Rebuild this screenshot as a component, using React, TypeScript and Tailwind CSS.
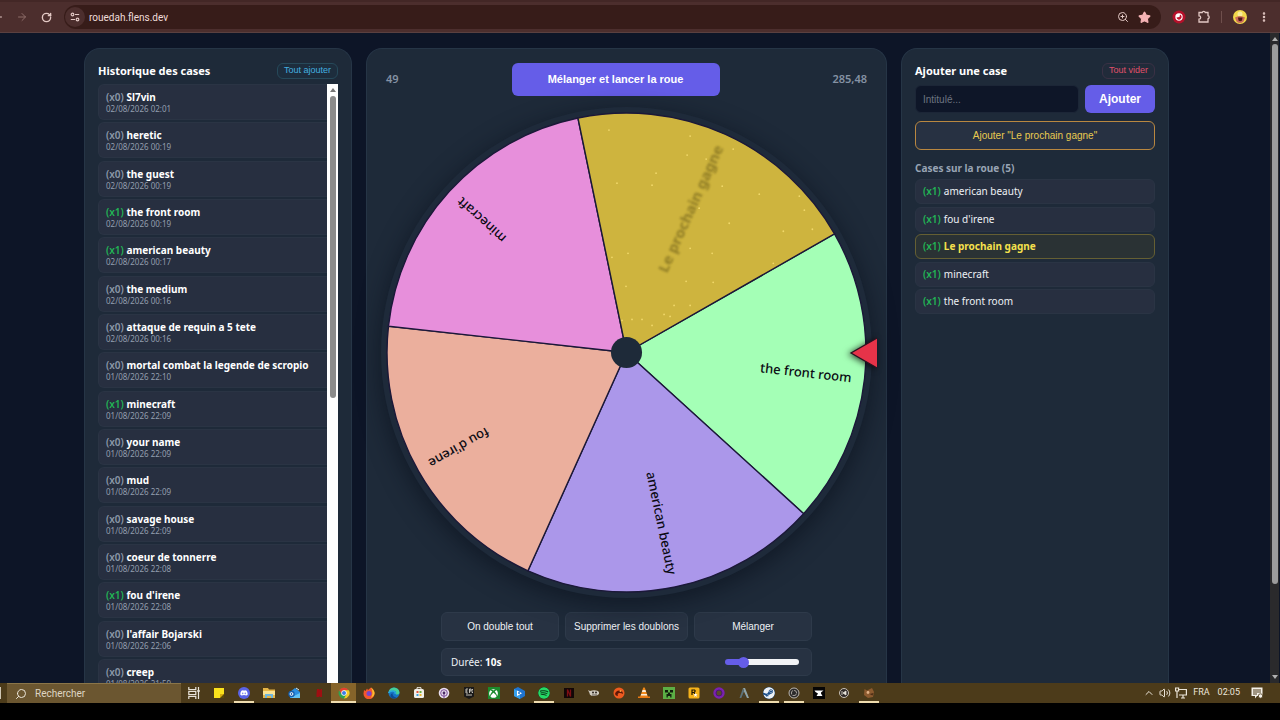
import { ReactNode, useState } from "react";
import {
  ArrowLeft,
  ArrowRight,
  ChevronUp,
  EllipsisVertical,
  RotateCw,
  Search,
  Star,
  Volume2,
  ZoomIn,
} from "lucide-react";
import { FaDiscord, FaSpotify, FaSteam, FaXbox } from "react-icons/fa";

type HistoryEntry = { count: number; name: string; date: string };
type Slice = { label: string; color: string; gold?: boolean };

const history: HistoryEntry[] = [
  { count: 0, name: "Sl7vin", date: "02/08/2026 02:01" },
  { count: 0, name: "heretic", date: "02/08/2026 00:19" },
  { count: 0, name: "the guest", date: "02/08/2026 00:19" },
  { count: 1, name: "the front room", date: "02/08/2026 00:19" },
  { count: 1, name: "american beauty", date: "02/08/2026 00:17" },
  { count: 0, name: "the medium", date: "02/08/2026 00:16" },
  { count: 0, name: "attaque de requin a 5 tete", date: "02/08/2026 00:16" },
  { count: 0, name: "mortal combat la legende de scropio", date: "01/08/2026 22:10" },
  { count: 1, name: "minecraft", date: "01/08/2026 22:09" },
  { count: 0, name: "your name", date: "01/08/2026 22:09" },
  { count: 0, name: "mud", date: "01/08/2026 22:09" },
  { count: 0, name: "savage house", date: "01/08/2026 22:09" },
  { count: 0, name: "coeur de tonnerre", date: "01/08/2026 22:08" },
  { count: 1, name: "fou d'irene", date: "01/08/2026 22:08" },
  { count: 0, name: "l'affair Bojarski", date: "01/08/2026 22:06" },
  { count: 0, name: "creep", date: "01/08/2026 21:59" },
];

const slices: Slice[] = [
  { label: "the front room", color: "#a4ffb6" },
  { label: "american beauty", color: "#ab97ea" },
  { label: "fou d'irene", color: "#ebaf9d" },
  { label: "minecraft", color: "#e78fdb" },
  { label: "Le prochain gagne", color: "#ceb43e", gold: true },
];

const cases = ["american beauty", "fou d'irene", "Le prochain gagne", "minecraft", "the front room"];

// glitter on the golden slice
const sparkles = [
  [690, 136], [687, 155], [733, 149], [656, 173], [617, 183], [652, 185], [759, 194], [799, 196],
  [804, 210], [729, 223], [812, 229], [783, 231], [690, 248], [712, 253], [612, 257], [628, 253],
  [773, 263], [686, 281], [713, 282], [626, 286], [674, 305], [690, 305], [664, 314], [670, 316],
  [632, 319], [642, 319], [652, 325], [622, 320], [699, 208], [609, 130], [706, 159], [722, 186],
];

/* ---------- Browser bar ---------- */

function BrowserBar() {
  return (
    <header className="flex h-[33px] shrink-0 items-center border-t-2 border-b border-t-[#432726] border-b-[#5a4040] bg-[#4c2e2d] pr-[10px] text-[#e3c9c5]">
      <button aria-label="Précédent" className="-ml-2 w-3">
        <ArrowLeft size={12} />
      </button>
      <button aria-label="Suivant" className="ml-3 text-[#8d6c69]">
        <ArrowRight size={12} />
      </button>
      <button aria-label="Actualiser" className="ml-[13px]">
        <RotateCw size={11} strokeWidth={3} />
      </button>
      <div className="ml-3 flex h-6 flex-1 items-center rounded-full bg-[#371c19] pr-[10px]">
        <button
          aria-label="Informations sur le site"
          className="ml-px flex size-5 items-center justify-center rounded-full bg-[#4c2e2d]"
        >
          <svg viewBox="0 0 12 12" className="size-[10px]" fill="none" stroke="currentColor" strokeWidth="1.4">
            <circle cx="3" cy="3" r="1.6" />
            <path d="M6 3h5M1 9h5" />
            <circle cx="9" cy="9" r="1.6" />
          </svg>
        </button>
        <span className="ml-1 flex-1 font-['Roboto',sans-serif] text-[10px] text-[#efdcd9]">rouedah.flens.dev</span>
        <button aria-label="Zoom">
          <ZoomIn size={12} />
        </button>
        <button aria-label="Favori" className="ml-[9px] text-[#f5b3b5]">
          <Star size={13} fill="currentColor" />
        </button>
      </div>
      <button aria-label="Extension" className="ml-[11px]">
        <svg viewBox="0 0 14 14" className="size-[14px]">
          <circle cx="7" cy="7" r="6.5" fill="#b5102a" />
          <circle cx="7" cy="7" r="3.700" fill="#fff" />
          <path d="M4.500 7.500A2.600 2.600 0 1 0 8 4.600L7.500 7z" fill="#c4122c" />
        </svg>
      </button>
      <button aria-label="Extensions" className="ml-[11px]">
        <svg viewBox="0 0 14 14" className="size-[14px]" fill="none" stroke="currentColor" strokeWidth="1.3">
          <path d="M2 2.500h3.200a1.600 1.600 0 0 1 3.100 0H11v3.200a1.600 1.600 0 0 1 0 3.100V12H2V9.200a1.700 1.700 0 0 0 0-3.400z" />
        </svg>
      </button>
      <span className="ml-[10px] h-3 w-px bg-[#6f4f4c]" />
      <button aria-label="Profil" className="ml-[11px]">
        <svg viewBox="0 0 14 14" className="size-[14px]">
          <circle cx="7" cy="7" r="7" fill="#f2d84a" />
          <circle cx="7" cy="4" r="2.5" fill="#f8ec9a" />
          <path d="M2 7.5q5-3 10 0l-1.5 4q-3.500 3-7 0z" fill="#c96a58" />
          <path d="M5 7.500h4.500l-.5 3q-2 1.500-3.500 0z" fill="#4b1618" />
        </svg>
      </button>
      <button aria-label="Menu" className="ml-[11px]">
        <EllipsisVertical size={12} strokeWidth={3} />
      </button>
    </header>
  );
}

/* ---------- Shared bits ---------- */

function Panel({ children, className = "px-[13px]" }: { children: ReactNode; className?: string }) {
  return (
    <section className={`min-w-0 rounded-t-2xl border border-b-0 border-[#263546] bg-[#1e2a39] pt-[14px] ${className}`}>
      {children}
    </section>
  );
}

function Count({ value }: { value: number }) {
  return <span className={value > 0 ? "font-semibold text-[#22b455]" : "font-semibold text-[#8b97a8]"}>(x{value})</span>;
}

/* ---------- Left: history ---------- */

function HistoryPanel() {
  return (
    <Panel>
      <div className="flex h-4 items-center justify-between">
        <h2 className="text-[11px] font-bold text-white">Historique des cases</h2>
        <button className="h-4 rounded-md border border-[#26495a] bg-[#1d2d3d] px-[6px] font-['Liberation_Sans',sans-serif] text-[9px] text-[#43b0e0]">
          Tout ajouter
        </button>
      </div>
      <div className="mt-[5px] flex">
        <ul className="flex h-[611px] min-w-0 flex-1 flex-col justify-between">
          {history.map((entry) => (
            <li
              key={entry.name}
              className="h-9 shrink-0 rounded-l-md border border-r-0 border-[#2a3444] bg-[#272f40] px-[7px] pt-[5px]"
            >
              <p className="text-[10px] leading-[14px] font-bold whitespace-nowrap text-white">
                <Count value={entry.count} /> {entry.name}
              </p>
              <p className="text-[8px] leading-[10px] text-[#939eae]">{entry.date}</p>
            </li>
          ))}
        </ul>
        {/* Scrollbar */}
        <div className="flex w-[11px] flex-col items-center bg-white pt-1">
          <span className="border-x-[3px] border-b-4 border-x-transparent border-b-[#777]" />
          <span className="mt-1 h-[302px] w-[6px] rounded-full bg-[#8b8b8b]" />
        </div>
      </div>
    </Panel>
  );
}

/* ---------- Center: wheel ---------- */

const CX = 245;
const CY = 245;
const R = 239;
const START = -29.7;
const STEP = 72;

function point(angle: number, radius: number) {
  const rad = (angle * Math.PI) / 180;
  return `${CX + radius * Math.cos(rad)} ${CY + radius * Math.sin(rad)}`;
}

function Wheel() {
  return (
    <div className="relative mt-[11px]">
      <div className="rounded-full bg-[#1e2a3a] shadow-[0_6px_22px_2px_rgba(10,17,28,0.6)]">
        <svg viewBox="0 0 490 490" className="block w-full" role="img" aria-label="Roue">
          <defs>
            <filter id="soft" x="-10%" y="-50%" width="120%" height="200%">
              <feGaussianBlur stdDeviation="0.8" />
            </filter>
          </defs>
          {slices.map((slice, i) => {
            const from = START + i * STEP;
            return (
              <path
                key={slice.label}
                d={`M${CX} ${CY}L${point(from, R)}A${R} ${R} 0 0 1 ${point(from + STEP, R)}Z`}
                fill={slice.color}
                stroke="#1b1838"
                strokeWidth="1.4"
              />
            );
          })}
          {sparkles.map(([x, y]) => (
            <circle key={`${x}-${y}`} cx={x - 381.5} cy={y - 107} r="0.9" fill="#f7de72" opacity="0.85" />
          ))}
          {slices.map((slice, i) => (
            <text
              key={slice.label}
              x={CX + 226}
              y={CY + 5}
              textAnchor="end"
              transform={`rotate(${START + (i + 0.5) * STEP} ${CX} ${CY})`}
              className={slice.gold ? "text-[15px] font-bold" : "text-[13px] font-medium"}
              fill={slice.gold ? "#7b6a1d" : "#0a0a12"}
              opacity={slice.gold ? 0.75 : 1}
              filter={slice.gold ? "url(#soft)" : undefined}
            >
              {slice.label}
            </text>
          ))}
          <circle cx={CX} cy={CY} r="15.500" fill="#1e2a39" />
        </svg>
      </div>
      {/* Pointer */}
      <svg
        viewBox="0 0 28 32"
        className="absolute top-1/2 -right-[5px] h-8 w-7 -translate-y-1/2 drop-shadow-[-2px_1px_3px_rgba(0,0,0,0.7)]"
      >
        <path d="M28 1L2 16l26 15z" fill="#e63349" />
        <path d="M28 1L2 16l26 15" fill="none" stroke="#2a1320" strokeWidth="1.300" />
      </svg>
    </div>
  );
}

function WheelPanel() {
  const [duration, setDuration] = useState(10);
  const fill = 7 + (duration / 50) * 86;
  const action =
    "h-[29px] flex-1 rounded-md border border-[#2e3a4a] bg-[#273242] px-2 text-[10px] whitespace-nowrap text-[#eef1f5]";

  return (
    <Panel className="px-[14px]">
      <div className="flex items-center justify-between px-[5px] text-[11px] font-semibold text-[#8592a4]">
        <span>49</span>
        <button className="h-[33px] w-[208px] rounded-md bg-[#655de8] font-['Liberation_Sans',sans-serif] text-[11px] font-bold text-white">
          Mélanger et lancer la roue
        </button>
        <span>285,48</span>
      </div>
      <Wheel />
      <div className="mx-auto mt-[14px] w-[371px] font-['Liberation_Sans',sans-serif]">
        <div className="flex gap-[6px]">
          <button className={action}>On double tout</button>
          <button className={action}>Supprimer les doublons</button>
          <button className={action}>Mélanger</button>
        </div>
        <div className="mt-[7px] flex h-7 items-center justify-between rounded-md border border-[#2e3a4a] bg-[#273242] pr-3 pl-[9px]">
          <label htmlFor="duration" className="font-['Noto_Sans',sans-serif] text-[10px] text-[#eef1f5]">
            Durée: <b className="text-white">{duration}s</b>
          </label>
          <input
            id="duration"
            type="range"
            min={0}
            max={50}
            value={duration}
            onChange={(e) => setDuration(Number(e.target.value))}
            style={{ backgroundImage: `linear-gradient(to right, #655de8 ${fill}%, #f1f3f5 ${fill}%)` }}
            className="h-[6px] w-[74px] appearance-none rounded-full [&::-webkit-slider-thumb]:size-[11px] [&::-webkit-slider-thumb]:appearance-none [&::-webkit-slider-thumb]:rounded-full [&::-webkit-slider-thumb]:bg-[#655de8]"
          />
        </div>
      </div>
    </Panel>
  );
}

/* ---------- Right: add a case ---------- */

function AddPanel() {
  return (
    <Panel>
      <div className="flex h-4 items-center justify-between">
        <h2 className="text-[11px] font-bold text-white">Ajouter une case</h2>
        <button className="h-4 rounded-md border border-[#3a3145] bg-[#212b3a] px-[6px] font-['Liberation_Sans',sans-serif] text-[9px] text-[#e0506a]">
          Tout vider
        </button>
      </div>
      <form className="mt-[6px] flex gap-[6px]" onSubmit={(e) => e.preventDefault()}>
        <input
          type="text"
          aria-label="Intitulé"
          placeholder="Intitulé..."
          className="h-7 min-w-0 flex-1 rounded-md border border-[#1c2637] bg-[#0e1628] px-[7px] font-['Liberation_Sans',sans-serif] text-[10px] text-white placeholder:text-[#6d7480]"
        />
        <button className="h-7 w-[70px] rounded-md bg-[#655de8] font-['Liberation_Sans',sans-serif] text-xs font-bold text-white">
          Ajouter
        </button>
      </form>
      <button className="mt-2 h-[29px] w-full rounded-md border border-[#b98740] bg-[#273142] font-['Liberation_Sans',sans-serif] text-[10px] text-[#e9cb50]">
        Ajouter "Le prochain gagne"
      </button>
      <h3 className="mt-[10px] text-[10px] leading-4 font-bold text-[#98a4b4]">Cases sur la roue (5)</h3>
      <ul className="mt-[3px] flex h-[135px] flex-col justify-between">
        {cases.map((name) => {
          const gold = name === "Le prochain gagne";
          return (
            <li
              key={name}
              className={`flex h-[25px] items-center gap-[3px] rounded-md border px-[7px] text-[10px] ${
                gold
                  ? "border-[#655f33] bg-[#2a3234] font-bold text-[#f5e04c]"
                  : "border-[#2a3444] bg-[#272f40] text-[#eef1f5]"
              }`}
            >
              <Count value={1} />
              <span>{name}</span>
            </li>
          );
        })}
      </ul>
    </Panel>
  );
}

/* ---------- Taskbar ---------- */

type App = { name: string; icon: ReactNode; open?: boolean; active?: boolean };

const svg = (children: ReactNode) => (
  <svg viewBox="0 0 12 12" className="size-3">
    {children}
  </svg>
);

const apps: App[] = [
  {
    name: "Vue des tâches",
    icon: svg(
      <g fill="none" stroke="#e9e4da" strokeWidth="1.200">
        <path d="M.8 0v2.500h7V0M.8 12V9.500h7V12M.8 4.300h7v3.400h-7zM10.500 0v12" />
        <path d="M9.300 4h2.400" strokeWidth="2" />
      </g>
    ),
  },
  {
    name: "Pense-bête",
    icon: svg(
      <>
        <path d="M1 1h10v6L7 11H1z" fill="#fbe21c" />
        <path d="M7 7h4v4H7z" fill="#5b4a08" />
        <path d="M7 11l4-4H7z" fill="#d9ad0c" />
      </>
    ),
  },
  {
    name: "Discord",
    open: true,
    icon: (
      <span className="flex size-3 items-center justify-center rounded-full bg-[#5a63e6] text-white">
        <FaDiscord size={8} />
      </span>
    ),
  },
  {
    name: "Explorateur",
    icon: svg(
      <>
        <path d="M0 1h5l1 1.500h6V11H0z" fill="#e5b546" />
        <path d="M0 4h12v4H0z" fill="#f9e294" />
        <path d="M2 7h8v4H8V9H4v2H2z" fill="#6fb5dc" />
      </>
    ),
  },
  {
    name: "Outlook",
    icon: svg(
      <>
        <path d="M2 5l5-4 5 4v6H2z" fill="#2b8fe0" />
        <path d="M2 11l10-5v5z" fill="#63c4f5" />
        <circle cx="3.500" cy="7" r="3.200" fill="#155fae" />
        <circle cx="3.500" cy="7" r="1.400" fill="none" stroke="#fff" />
        <path d="M8 1l3 2" stroke="#d7ecfa" />
      </>
    ),
  },
  { name: "Jeu", icon: svg(<path d="M4 2h2l1 1 1-1h1v8H7L6 9v1H3.500V7z" fill="#9e0f12" />) },
  {
    name: "Chrome",
    open: true,
    active: true,
    icon: svg(
      <>
        <circle cx="6" cy="6" r="5.500" fill="#2fa24f" />
        <path d="M1.200 3.200A5.500 5.500 0 0 1 10.800 3.200L6 3.500 3.700 7.200z" fill="#e5402f" />
        <path d="M10.800 3.200A5.500 5.500 0 0 1 6 11.500l2.400-4.200L6 3.300z" fill="#f8c827" />
        <circle cx="6" cy="6" r="2.700" fill="#fff" />
        <circle cx="6" cy="6" r="2" fill="#3b7de8" />
      </>
    ),
  },
  {
    name: "Firefox",
    icon: svg(
      <>
        <path d="M1 3l1.500 1L4 1.500 5 3l3-2.500Q12 3.500 11.500 7A5.500 5.500 0 0 1 .5 6.500z" fill="#f4572e" />
        <path d="M8 .5Q12 3.500 11.500 7A5.500 5.500 0 0 1 8 11Q11 6 8 .5z" fill="#fbc02d" />
        <circle cx="6" cy="6.500" r="2.500" fill="#7a45c9" />
      </>
    ),
  },
  {
    name: "Edge",
    icon: svg(
      <>
        <circle cx="6" cy="6" r="5.500" fill="#1673c4" />
        <path d="M.5 6A5.500 5.500 0 0 1 11.500 6Q11 8 8 7.500 9 4 5.500 3.800 2 4 .5 6z" fill="#45cf9a" />
        <path d="M.6 6Q2 3.500 5 4 8 4.500 7 7" fill="none" stroke="#2aa9dd" strokeWidth="1.500" />
        <path d="M4.500 6Q4 9.500 8.500 10.500 5 12.500 2.500 10 2 7 4.500 6z" fill="#0d4a93" />
      </>
    ),
  },
  {
    name: "Microsoft Store",
    icon: svg(
      <>
        <rect x="1" y="2" width="10" height="9" rx="1.500" fill="#f1efe9" />
        <path d="M4 2V.7h4V2" fill="none" stroke="#f1efe9" />
        <path d="M3.500 4h2v2h-2z" fill="#e2553c" />
        <path d="M6.500 4h2v2h-2z" fill="#6aae3d" />
        <path d="M3.500 7h2v2h-2z" fill="#3a9fe0" />
        <path d="M6.500 7h2v2h-2z" fill="#e9b42c" />
      </>
    ),
  },
  {
    name: "Podcasts",
    icon: svg(
      <>
        <circle cx="6" cy="6" r="5.300" fill="#e9dff0" />
        <circle cx="6" cy="6" r="3.300" fill="none" stroke="#7b4f98" />
        <circle cx="6" cy="6" r="1.400" fill="#4a2a66" />
        <path d="M5.500 7h1v4h-1z" fill="#7b4f98" />
      </>
    ),
  },
  {
    name: "Epic Games",
    icon: svg(
      <>
        <path d="M1 0h10v9.500L6 12 1 9.500z" fill="#1a1918" />
        <path d="M3 2v4M3 2h2M3 4h1.500M3 6h2M6.500 6V2H8v2H6.500M10 2.500H9v3h1M3 8h6" fill="none" stroke="#e6e2d9" strokeWidth=".8" />
      </>
    ),
  },
  {
    name: "Xbox",
    icon: (
      <span className="flex size-3 items-center justify-center bg-[#1b8a2c] text-white">
        <FaXbox size={9} />
      </span>
    ),
  },
  {
    name: "Films",
    icon: svg(
      <>
        <path d="M1 2l4-2 7 4v5l-5 3-6-3z" fill="#1f74cf" />
        <path d="M1 2l6 3v7L1 9z" fill="#37a1ec" />
        <path d="M4 3.500l5 2.700-5 2.800z" fill="#fff" />
        <circle cx="6" cy="6" r="1" fill="#1f74cf" />
      </>
    ),
  },
  {
    name: "Spotify",
    open: true,
    icon: <FaSpotify size={12} className="rounded-full bg-[#0d3b1d] text-[#25d865]" />,
  },
  {
    name: "Netflix",
    icon: svg(
      <>
        <path d="M1 1h10v10H1z" fill="#120707" />
        <path d="M4.500 9.500v-7l3 7v-7" fill="none" stroke="#7d0e13" strokeWidth="1.300" />
      </>
    ),
  },
  {
    name: "Manette",
    icon: svg(
      <>
        <path d="M0 3l2 1q4-1.500 8 0 1.500 1 1 3Q9 9.500 5 9 1.500 8.500 1.500 6z" fill="#cfcabf" />
        <circle cx="5" cy="5.500" r="1" fill="#2d2620" />
        <circle cx="8" cy="5.500" r="1" fill="#2d2620" />
        <path d="M4 8h5" stroke="#4a4038" strokeWidth=".8" />
      </>
    ),
  },
  {
    name: "Origin",
    icon: svg(
      <>
        <circle cx="6" cy="6" r="5.500" fill="#ee5a1f" />
        <path d="M2 7q1-4 5-3.500 3 .5 3 3.500-2-1.500-4-1T5 9Q2.500 9 2 7z" fill="#5e1708" />
        <circle cx="7.500" cy="4" r="1" fill="#f9a03f" />
      </>
    ),
  },
  {
    name: "VLC",
    icon: svg(
      <>
        <path d="M5.300.5h1.400L10 10H2z" fill="#f28a1c" />
        <path d="M4.600 3h2.800l.7 2H3.900zM3.200 7h5.600l.4 1.500H2.800z" fill="#f6ead9" />
        <path d="M0 9.500h12V11H0z" fill="#e97912" />
      </>
    ),
  },
  {
    name: "Minecraft",
    icon: svg(
      <>
        <path d="M0 0h12v12H0z" fill="#5cae45" />
        <path d="M2 3h3v2.500H2zM7 3h3v2.500H7zM5 5.500h2V7h1.500v3.500H7.200V9H4.800v1.500H3.500V7H5z" fill="#10200c" />
      </>
    ),
  },
  {
    name: "Rockstar Games",
    icon: svg(
      <>
        <rect x=".5" y=".5" width="11" height="11" rx="1.500" fill="#f5b21a" />
        <path d="M4 8V3h2.500q1.500 1-.5 2.500H4M6 5.500L7 7" fill="none" stroke="#1d1606" strokeWidth="1.200" />
        <path d="M7.500 6l.6 1.300h1.500l-1.200 1 .5 1.700-1.400-1-1.400 1 .5-1.700-1.200-1h1.500z" fill="#fff" />
      </>
    ),
  },
  {
    name: "Tor",
    icon: svg(
      <>
        <circle cx="6" cy="6" r="5.700" fill="#7b22b0" />
        <circle cx="6" cy="6" r="3" fill="#5a4a2c" stroke="#4b1378" />
      </>
    ),
  },
  {
    name: "ARK",
    icon: svg(
      <>
        <path d="M5 1h2l4 10H9L6 4.500z" fill="#8fa3a8" />
        <path d="M5 1L1.500 11h1.800L6 4.500z" fill="#5c727a" />
        <path d="M5 8l1 3 1-3z" fill="#36454c" />
      </>
    ),
  },
  {
    name: "Steam",
    open: true,
    icon: <FaSteam size={12} className="rounded-full bg-[#1b4f8b] text-[#eef3f7]" />,
  },
  {
    name: "OBS",
    open: true,
    icon: svg(
      <>
        <circle cx="6" cy="6" r="5" fill="#2b2a2b" stroke="#bab6b0" strokeWidth="1" />
        <circle cx="6" cy="6" r="2.600" fill="none" stroke="#a8a49e" strokeWidth="1" />
        <path d="M6 6Q4.500 4.500 6 2.500M6 6q2-.5 3 1.500M6 6Q5.500 8 3.300 8" fill="none" stroke="#2b2a2b" strokeWidth="1" />
      </>
    ),
  },
  {
    name: "CurseForge",
    icon: svg(
      <>
        <path d="M0 0h12v12H0z" fill="#060505" />
        <path d="M1.500 3.500H10.500L8 5.500v1l1.500 2.500h-6L5 6.500 2.500 5z" fill="#fff" />
      </>
    ),
  },
  {
    name: "Lecteur",
    icon: svg(
      <>
        <circle cx="6" cy="6" r="4.500" fill="#2f2a28" stroke="#c9c2b8" strokeWidth="1" />
        <path d="M4 4v4M8 4L5 6l3 2z" fill="#e9e4da" stroke="#e9e4da" strokeWidth=".8" />
      </>
    ),
  },
  {
    name: "Gimp",
    open: true,
    icon: svg(
      <>
        <path d="M1.500 2L4 3.500 9 1l2 4-1 5-5 1-4-3z" fill="#8c5a2f" />
        <circle cx="5" cy="5.500" r="1.400" fill="#e0b187" />
        <path d="M6.500 7l4-1-1 2.500z" fill="#4d2c16" />
      </>
    ),
  },
];

function Taskbar() {
  return (
    <footer className="shrink-0 bg-black pb-[17px]">
      <div className="flex h-5 items-center bg-[#4c3b1a] pr-[17px] text-[#ece6da]">
        <div className="-ml-px h-3 w-[2px] bg-[#cfc6b4]" />
        <label className="ml-[6px] flex h-5 w-[174px] items-center gap-2 border-t border-[#8a7548] bg-[#6b5630] pl-2">
          <Search size={12} className="-scale-x-100" />
          <input
            type="text"
            aria-label="Rechercher"
            placeholder="Rechercher"
            className="w-32 bg-transparent font-['Roboto',sans-serif] text-[10px] placeholder:text-[#ded5c3]"
          />
        </label>
        <nav className="flex flex-1">
          {apps.map((app) => (
            <button
              key={app.name}
              aria-label={app.name}
              className={`flex h-5 w-[25px] flex-col items-center justify-between pt-1 ${app.active ? "bg-[#86642a]" : ""}`}
            >
              {app.icon}
              {app.open && <span className={`h-[2px] bg-[#efdcae] ${app.active ? "w-full" : "w-5"}`} />}
            </button>
          ))}
        </nav>
        <div className="flex items-center text-[9px]">
          <ChevronUp size={12} />
          <Volume2 size={12} className="ml-1" />
          <svg viewBox="0 0 12 12" className="ml-1 size-3" fill="none" stroke="currentColor" strokeWidth="1.200">
            <path d="M4 2.500h7.400V8H4M6 11h4M8 8v3M.6 1h3v3h-3zM2 4v7" />
          </svg>
          <span className="ml-[6px] font-['Roboto',sans-serif]">FRA</span>
          <time className="ml-2 font-['Roboto',sans-serif]">02:05</time>
          <svg viewBox="0 0 12 12" className="ml-[11px] size-3">
            <path d="M.5.5h11V9H6l-2 2.500V9H.5z" fill="#f4f0e8" />
            <path d="M2 3h8M2 5h8M2 7h4" stroke="#4c3b1a" />
            <circle cx="9.500" cy="9" r="2.200" fill="#f4f0e8" stroke="#4c3b1a" strokeWidth=".8" />
          </svg>
        </div>
      </div>
    </footer>
  );
}

export default function App() {
  return (
    <div className="flex h-screen flex-col overflow-hidden bg-black font-['Noto_Sans',sans-serif]">
      <BrowserBar />
      <div className="flex min-h-0 flex-1 bg-[#0d1527] pr-px">
        <main className="grid min-w-0 flex-1 grid-cols-[268px_minmax(0,1fr)_268px] gap-[14px] overflow-hidden pt-[15px] pr-[101px] pl-[84px]">
          <HistoryPanel />
          <WheelPanel />
          <AddPanel />
        </main>
        {/* Page scrollbar */}
        <div className="flex w-[9px] flex-col items-center bg-[#2a2a2c] py-[4px]">
          <span className="border-x-[3px] border-b-4 border-x-transparent border-b-[#b0b0b0]" />
          <span className="mt-[3px] h-[540px] w-[6px] rounded-full bg-[#9c9c9c]" />
          <span className="mt-auto border-x-[3px] border-t-4 border-x-transparent border-t-[#b0b0b0]" />
        </div>
      </div>
      <Taskbar />
    </div>
  );
}
